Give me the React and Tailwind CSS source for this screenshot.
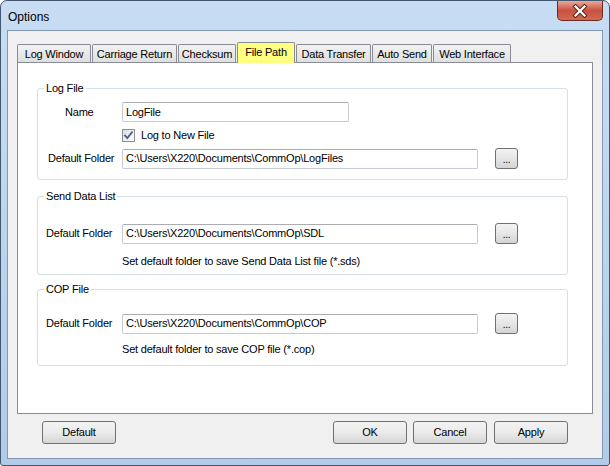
import React from "react";

const font = { fontFamily: '"Liberation Sans", Arial, sans-serif' };

function Tab({ label, w, selected, ml }) {
  if (selected) {
    return (
      <div
        className={`relative z-10 ${ml} h-[21px] ${w} flex items-center justify-center border border-b-0 border-[#898c95] bg-[#ffff80] text-[11px] text-black rounded-t-[2px]`}
      >
        <span className="mt-[-1px]">{label}</span>
      </div>
    );
  }
  return (
    <div
      className={`${ml} h-[19px] ${w} flex items-center justify-center border border-b-0 border-[#898c95] bg-gradient-to-b from-[#f2f2f2] to-[#dedede] text-[11px] text-black rounded-t-[2px]`}
    >
      <span className="mt-[1px]">{label}</span>
    </div>
  );
}

function TextBox({ value, w }) {
  return (
    <div
      className={`${w} h-[20px] flex items-center pl-[3px] border border-[#c6cbd3] border-t-[#abadb3] rounded-[2px] bg-white text-[11px] text-black whitespace-nowrap overflow-hidden`}
    >
      {value}
    </div>
  );
}

function Browse() {
  return (
    <button className="ml-[17px] w-[23px] h-[21px] flex items-end justify-center pb-[3px] border border-[#707070] rounded-[3px] bg-gradient-to-b from-[#f3f3f3] via-[#e6e6e6] to-[#d4d4d4] text-[10px] leading-none text-black">
      ...
    </button>
  );
}

function DlgButton({ label, ml }) {
  return (
    <button
      className={`${ml} w-[74px] h-[23px] flex items-center justify-center border border-[#707070] rounded-[3px] bg-gradient-to-b from-[#f2f2f2] via-[#ebebeb] to-[#d5d5d5] text-[11px] text-black`}
    >
      {label}
    </button>
  );
}

function Group({ title, mt, pb, children }) {
  return (
    <fieldset
      className={`${mt} ${pb} ml-[19px] w-[531px] border border-[#d5dfe5] rounded-[3px]`}
    >
      <legend className="ml-[6px] px-[2px] text-[11px] leading-[13px] text-black">
        {title}
      </legend>
      {children}
    </fieldset>
  );
}

function CheckBox() {
  return (
    <div className="w-[13px] h-[13px] border border-[#8e8f8f] bg-gradient-to-br from-[#dcdcdc] to-[#ffffff] flex items-center justify-center">
      <svg width="11" height="11" viewBox="0 0 11 11">
        <path
          d="M2 5.5 L4.3 8 L9 2.2"
          fill="none"
          stroke="#4a5f8f"
          strokeWidth="1.8"
          strokeLinecap="square"
        />
      </svg>
    </div>
  );
}

export default function App() {
  return (
    <div
      className="w-[610px] h-[466px] bg-white overflow-hidden tracking-[-0.2px]"
      style={font}
    >
      <div className="w-full h-full flex flex-col rounded-t-[7px] rounded-b-[3px] border border-[#43576f] bg-gradient-to-b from-[#c8ddf3] via-[#bcd5ef] to-[#b1cbe8]">
        {/* title bar */}
        <div className="h-[29px] flex items-start justify-between">
          <span className="pl-[7px] pt-[7px] text-[12px] tracking-normal text-black">
            Options
          </span>
          <div className="mr-[6px] w-[46px] h-[20px] rounded-b-[5px] border border-t-0 border-[#6b2a24] bg-gradient-to-b from-[#e9a99b] via-[#c8503f] to-[#d36a4f] flex items-center justify-center">
            <svg width="16" height="14" viewBox="0 0 16 14">
              <path
                d="M3.5 2.5 L12.5 11.5 M12.5 2.5 L3.5 11.5"
                stroke="#5a2520"
                strokeWidth="4.2"
                strokeLinecap="square"
              />
              <path
                d="M3.5 2.5 L12.5 11.5 M12.5 2.5 L3.5 11.5"
                stroke="#ffffff"
                strokeWidth="2.2"
                strokeLinecap="square"
              />
            </svg>
          </div>
        </div>

        {/* client area */}
        <div className="mx-[6px] mb-[6px] flex-1 flex flex-col border border-[#8399b3] bg-[#f0f0f0]">
          {/* tabs */}
          <div className="mt-[12px] ml-[9px] h-[20px] flex items-end">
            <Tab label="Log Window" w="w-[74px]" ml="ml-0" />
            <Tab label="Carriage Return" w="w-[85px]" ml="ml-[1px]" />
            <Tab label="Checksum" w="w-[58px]" ml="ml-[1px]" />
            <Tab label="File Path" w="w-[58px]" ml="ml-[1px]" selected />
            <Tab label="Data Transfer" w="w-[75px]" ml="ml-[1px]" />
            <Tab label="Auto Send" w="w-[60px]" ml="ml-[1px]" />
            <Tab label="Web Interface" w="w-[78px]" ml="ml-[1px]" />
          </div>

          {/* panel */}
          <div className="ml-[9px] w-[576px] h-[352px] mt-[-1px] border border-[#898c95] bg-white flex flex-col">
            <Group title="Log File" mt="mt-[19px]" pb="pb-[10px]">
              <div className="mt-[7px] flex items-center">
                <div className="w-[84px] pl-[27px] text-[11px] text-black">Name</div>
                <TextBox value="LogFile" w="w-[227px]" />
              </div>
              <div className="mt-[7px] h-[13px] flex items-center">
                <div className="w-[84px]" />
                <CheckBox />
                <span className="ml-[6px] text-[11px] text-black">Log to New File</span>
              </div>
              <div className="mt-[6px] flex items-center">
                <div className="w-[84px] pl-[10px] text-[11px] text-black whitespace-nowrap">
                  Default Folder
                </div>
                <TextBox
                  value="C:\Users\X220\Documents\CommOp\LogFiles"
                  w="w-[356px]"
                />
                <Browse />
              </div>
            </Group>

            <Group title="Send Data List" mt="mt-[10px]" pb="pb-[6px]">
              <div className="mt-[20px] flex items-center">
                <div className="w-[84px] pl-[8px] text-[11px] text-black whitespace-nowrap">
                  Default Folder
                </div>
                <TextBox
                  value="C:\Users\X220\Documents\CommOp\SDL"
                  w="w-[356px]"
                />
                <Browse />
              </div>
              <div className="mt-[11px] ml-[84px] text-[11px] leading-[13px] text-black">
                Set default folder to save Send Data List file (*.sds)
              </div>
            </Group>

            <Group title="COP File" mt="mt-[8px]" pb="pb-[9px]">
              <div className="mt-[17px] flex items-center">
                <div className="w-[84px] pl-[8px] text-[11px] text-black whitespace-nowrap">
                  Default Folder
                </div>
                <TextBox
                  value="C:\Users\X220\Documents\CommOp\COP"
                  w="w-[356px]"
                />
                <Browse />
              </div>
              <div className="mt-[9px] ml-[84px] text-[11px] leading-[13px] text-black">
                Set default folder to save COP file (*.cop)
              </div>
            </Group>
          </div>

          {/* bottom buttons */}
          <div className="mt-[7px] flex items-center">
            <DlgButton label="Default" ml="ml-[34px]" />
            <DlgButton label="OK" ml="ml-[217px]" />
            <DlgButton label="Cancel" ml="ml-[6px]" />
            <DlgButton label="Apply" ml="ml-[7px]" />
          </div>
        </div>
      </div>
    </div>
  );
}
